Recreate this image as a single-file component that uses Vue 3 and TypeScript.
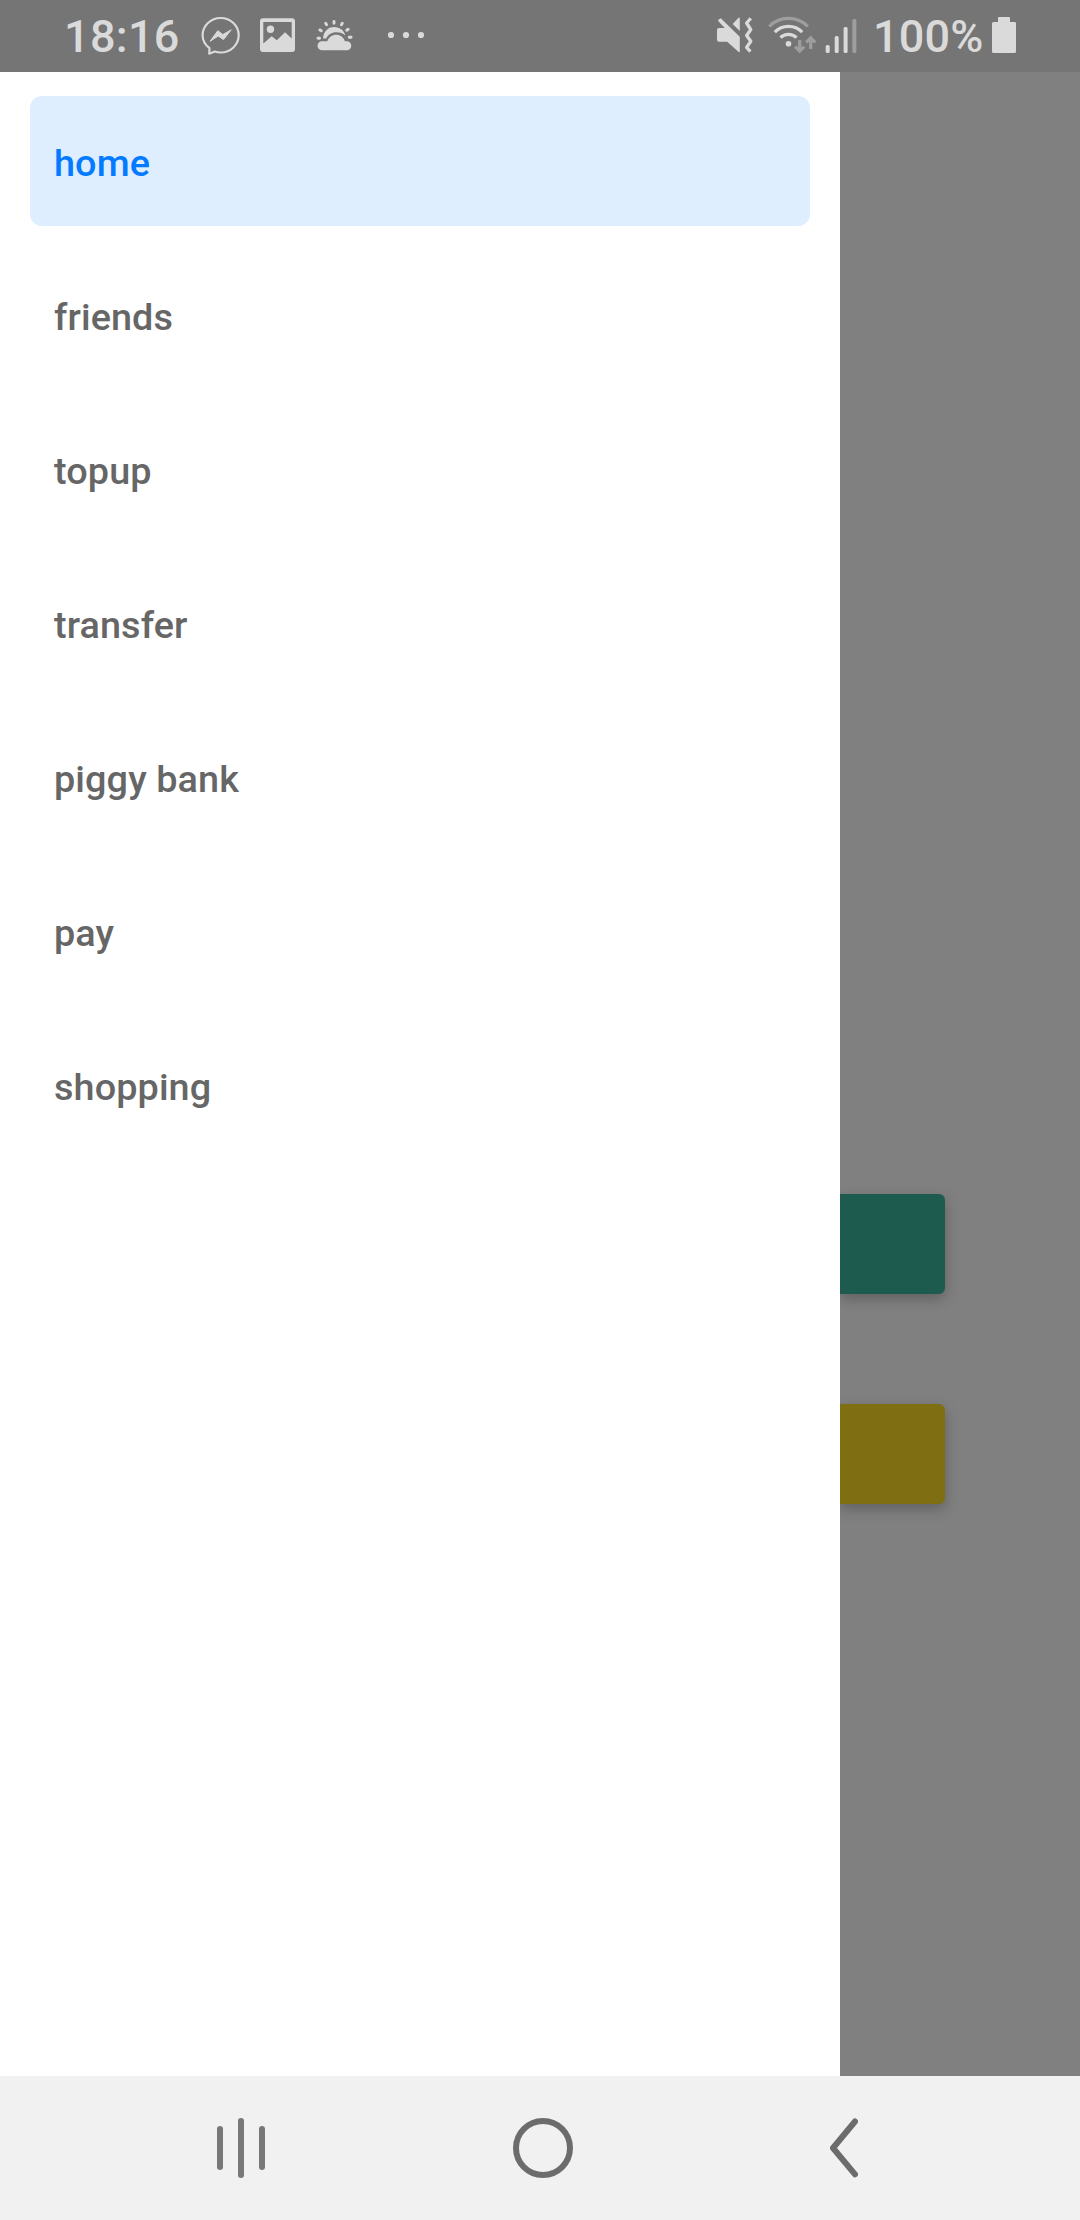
<script setup lang="ts">
import { ref } from 'vue'

const items: string[] = ['home', 'friends', 'topup', 'transfer', 'piggy bank', 'pay', 'shopping']
const active = ref<string>('home')
</script>

<template>
  <div class="screen">
    <header class="status">
      <span class="clock">18:16</span>
      <svg class="messenger" width="40" height="72" viewBox="200 0 40 72" fill="none" stroke="#dadada">
        <path d="M209.500 48.200C205.300 45 202.600 40.500 202.600 35.300 202.600 25.700 210.800 18 220.700 18S238.700 25.700 238.700 35.300 230.600 52.500 220.700 52.500c-2.100 0-4.100-.4-6-1L209.200 53.700Z" stroke-width="2.200" stroke-linejoin="round" />
        <path d="M210 41.300 217.800 30.700 222.800 34.600 231.200 29.800 223.500 39.600 218.200 36Z" fill="#dadada" stroke-width="1" stroke-linejoin="round" />
      </svg>
      <svg class="picture" width="36" height="72" viewBox="260 0 36 72" fill="#dadada">
        <path fill-rule="evenodd" d="M263 18.300H292a3 3 0 0 1 3 3V49a3 3 0 0 1-3 3H263a3 3 0 0 1-3-3V21.300a3 3 0 0 1 3-3ZM263.300 22V43.500L271.700 36.200 276.800 40.200 285 32.300 291.700 38.400V22Z" />
        <circle cx="270.500" cy="29.300" r="3.700" />
      </svg>
      <svg class="weather" width="38" height="72" viewBox="316 0 38 72" fill="#dadada">
        <path d="M323 38.500C323.500 31.500 328 27 334 27S344.500 31 345.200 35.500C343 33.500 340 32.300 336.500 32.300 331.500 32.300 328 34.800 326.300 38.500Z" />
        <path d="M322 41.300h5.300C328.800 37.200 332 34.800 336.200 34.800s7.400 2.500 8.700 6.500H346.800a4.400 4.400 0 0 1 0 8.900H322a4.450 4.450 0 0 1 0-8.900Z" />
        <g stroke="#dadada" stroke-width="2.900" stroke-linecap="round">
          <path d="M334 21.500v1.800M325.700 23.300l.9 1.500M342.300 23.300l-.9 1.500M319.800 29.900l1.500.8M348.200 29.200l-1.500 1M318 38.200h1.600M349.200 37.300h1.900" />
        </g>
      </svg>
      <svg class="more" width="38" height="72" viewBox="387 0 38 72" fill="#dadada">
        <circle cx="391" cy="35" r="3.100" />
        <circle cx="406" cy="35" r="3.100" />
        <circle cx="421" cy="35" r="3.100" />
      </svg>
      <span class="spacer"></span>
      <svg class="mute" width="38" height="72" viewBox="716 0 38 72" fill="#dadada">
        <path d="M720.800 18.200 739.800 36.800V51.200q0 1.500-1.400.6L727.200 41.800H719a2 2 0 0 1-2-2V29.900a2 2 0 0 1 2-2H724.700L718.600 21.400a1.400 1.400 0 0 1 0-2Z" />
        <path d="M732.600 24 738.300 17.900q1.500-1 1.500.6V31.100Z" />
        <path d="M750.800 18.400 746.600 23 750.800 29.600 746.600 35.500 750.800 41.300 746.600 47.400 750.400 51.700" fill="none" stroke="#dadada" stroke-width="3.300" stroke-linejoin="round" />
      </svg>
      <svg class="wifi" width="50" height="72" viewBox="767 0 50 72" fill="none" stroke="#dadada" stroke-width="3.200">
        <path d="M769.200 26.500C779.500 15.700 797.500 15.700 807.800 26.500" stroke="#9e9e9e" />
        <path d="M774.800 32.200C782.300 24.500 794.700 24.500 802.200 32.200" />
        <path d="M780.500 37.700C785 33.300 792 33.300 796.500 37.700" />
        <circle cx="788.500" cy="43.800" r="2.800" fill="#dadada" stroke="none" />
        <path d="M799.700 40V51M795.200 46.700 799.700 51.300 804.200 46.700M810.700 49V38.200M806.200 42.500 810.700 37.900 815.200 42.500" stroke="#9e9e9e" />
      </svg>
      <svg class="signal" width="32" height="72" viewBox="825 0 32 72" fill="#dadada">
        <rect x="825.700" y="45" width="4" height="8" rx="1.500" />
        <rect x="834.700" y="36" width="4" height="17" rx="1.500" />
        <rect x="843.600" y="27" width="4" height="26" rx="1.500" />
        <rect x="852.400" y="19" width="4" height="34" rx="1.500" fill="#9e9e9e" />
      </svg>
      <span class="percent">100%</span>
      <svg class="battery" width="24" height="72" viewBox="992 0 24 72" fill="#dadada">
        <path d="M999 17H1009a1 1 0 0 1 1 1V22H1014.500a1.500 1.500 0 0 1 1.500 1.500V51.500a1.500 1.500 0 0 1-1.500 1.500H993.500a1.500 1.500 0 0 1-1.500-1.500V23.500a1.500 1.500 0 0 1 1.500-1.500H998V18a1 1 0 0 1 1-1Z" />
      </svg>
    </header>

    <div class="body">
      <nav class="drawer">
        <button
          v-for="item in items"
          :key="item"
          class="item"
          :class="{ active: item === active }"
          @click="active = item"
        >
          <span class="label">{{ item }}</span>
        </button>
      </nav>
      <main class="content">
        <div class="tile green"></div>
        <div class="tile yellow"></div>
      </main>
    </div>

    <footer class="navbar">
      <svg class="recents" width="48" height="60" viewBox="0 0 48 60" fill="#787878">
        <rect x="0" y="8" width="6" height="44" rx="3" />
        <rect x="21" y="0" width="6" height="60" rx="3" />
        <rect x="42" y="8" width="6" height="44" rx="3" />
      </svg>
      <svg class="home" width="60" height="60" viewBox="0 0 60 60" fill="none" stroke="#6c6c6c" stroke-width="6">
        <circle cx="30" cy="30" r="27" />
      </svg>
      <svg class="back" width="28" height="60" viewBox="830 2118 28 60" fill="none" stroke="#6c6c6c" stroke-width="6" stroke-linecap="round" stroke-linejoin="round">
        <path d="M855 2121.500 833 2148 855 2174.300" />
      </svg>
    </footer>
  </div>
</template>

<style>
body {
  margin: 0;
}
</style>

<style scoped>
.screen {
  display: flex;
  flex-direction: column;
  width: 1080px;
  height: 2220px;
  overflow: hidden;
  background: #808080;
  font-family: Roboto, "Liberation Sans", sans-serif;
  font-weight: 500;
}
.status {
  display: flex;
  flex: none;
  box-sizing: border-box;
  height: 72px;
  padding: 0 64px;
  background: #757575;
  color: #dadada;
  font-size: 45px;
  line-height: 74px;
  white-space: nowrap;
}
.status svg {
  flex: none;
}
.clock {
  width: 136px;
  letter-spacing: 0.3px;
}
.picture {
  margin-left: 20px;
}
.weather {
  margin-left: 20px;
}
.more {
  margin-left: 33px;
}
.spacer {
  flex: 1;
}
.wifi {
  margin-left: 13px;
}
.signal {
  margin-left: 8px;
}
.percent {
  width: 119px;
  margin-left: 16px;
  letter-spacing: 0.2px;
}
.body {
  display: flex;
  flex: none;
  height: 2004px;
}
.drawer {
  display: flex;
  flex-direction: column;
  flex: none;
  gap: 24px;
  box-sizing: border-box;
  width: 840px;
  padding: 24px 30px;
  background: #fff;
}
.item {
  display: flex;
  align-items: center;
  flex: none;
  height: 130px;
  padding: 4px 24px 0;
  border: 0;
  border-radius: 12px;
  background: transparent;
  color: #666;
  font: inherit;
  font-size: 37.8px;
  line-height: 44px;
  letter-spacing: 0.1px;
  text-align: left;
}
.item.active {
  background: #deeeff;
  color: #047aff;
}
.content {
  display: flex;
  flex-direction: column;
  flex: 1;
  gap: 110px;
  padding-top: 1122px;
  overflow: hidden;
}
.tile {
  width: 105px;
  height: 100px;
  border-radius: 0 6px 6px 0;
  box-shadow: 0 5px 14px rgba(0, 0, 0, 0.25);
}
.green {
  background: #1d5b4f;
}
.yellow {
  background: #7f6e12;
}
.navbar {
  display: flex;
  align-items: center;
  flex: none;
  height: 144px;
  padding-left: 217px;
  background: #f1f1f1;
}
.home {
  margin-left: 248px;
}
.back {
  margin-left: 257px;
}
</style>
